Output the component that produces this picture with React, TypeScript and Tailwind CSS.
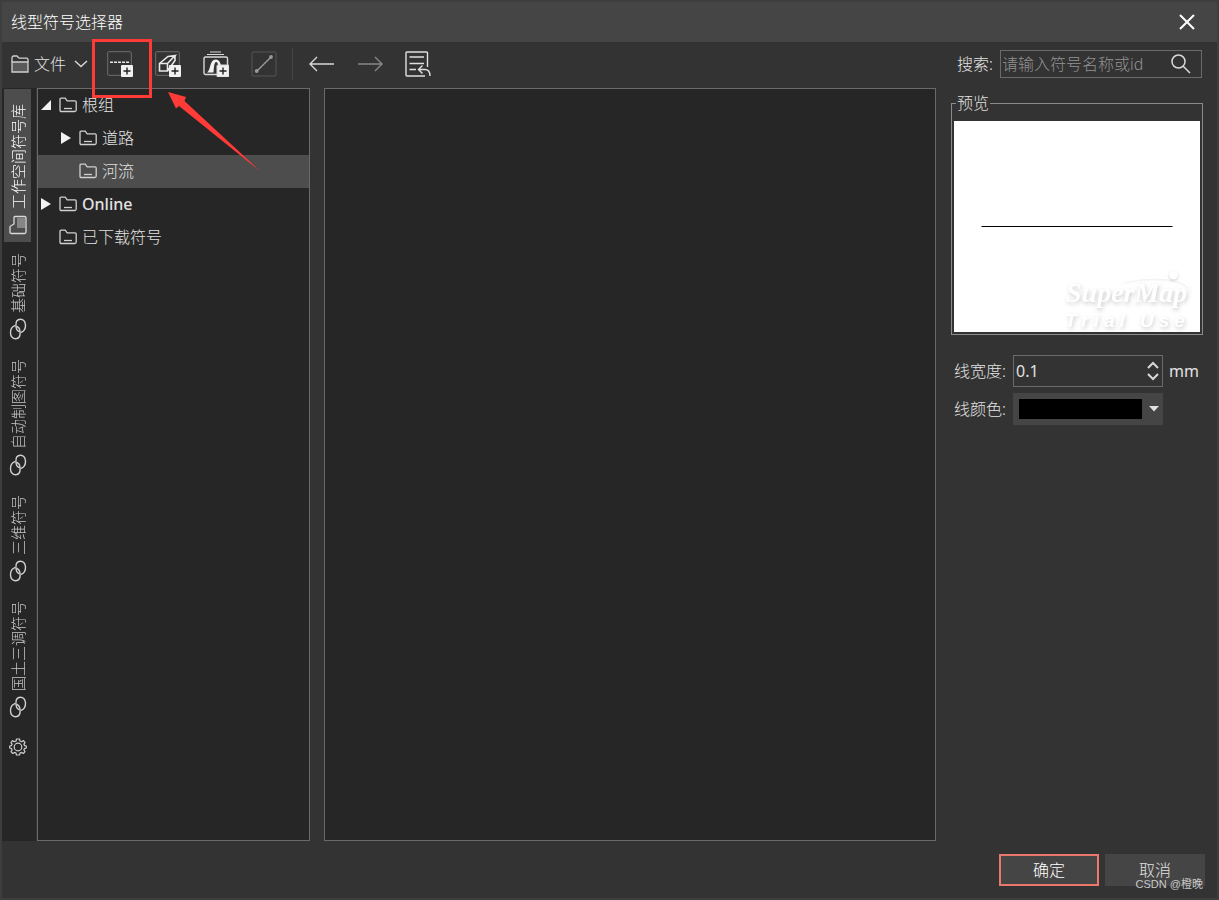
import React, { useState } from 'react';

interface IconProps {
  className?: string;
}

interface TreeItem {
  id: string;
  label: string;
  level: number;
  state: 'open' | 'closed' | 'leaf';
}

const libraryTabs = [
  { id: 'workspace', label: '工作空间符号库' },
  { id: 'basic', label: '基础符号' },
  { id: 'mapping', label: '自动制图符号' },
  { id: 'three', label: '三维符号' },
  { id: 'survey', label: '国土三调符号' },
];

const treeItems: TreeItem[] = [
  { id: 'root', label: '根组', level: 0, state: 'open' },
  { id: 'road', label: '道路', level: 1, state: 'closed' },
  { id: 'river', label: '河流', level: 1, state: 'leaf' },
  { id: 'online', label: 'Online', level: 0, state: 'closed' },
  { id: 'downloaded', label: '已下载符号', level: 0, state: 'leaf' },
];

const FolderIcon = ({ className = '' }: IconProps) => (
  <svg className={className} width="18" height="16" viewBox="0 0 18 16" fill="none" stroke="#d0d0d0" strokeWidth="1.3">
    <path d="M1 13.2V2.5Q1 1.2 2.2 1.2H6.2L8.2 3.8H16Q17.2 3.8 17.2 5V13Q17.2 14.5 15.8 14.5H2.3Q1 14.5 1 13.2Z" />
    <path d="M5 11.5H13" />
  </svg>
);

const FileIcon = () => (
  <svg width="18" height="18" viewBox="0 0 18 18" fill="none" stroke="#d0d0d0" strokeWidth="1.3">
    <path d="M1 7H17V17H1Z" fill="#5a5a5a" />
    <path d="M1 7V2.2L2.2 1H6L8 3.2H16L17 4.2V7" />
  </svg>
);

const PlusBadge = () => (
  <g>
    <rect x="14" y="14" width="12" height="12" rx="1" fill="#f0f0f0" />
    <path d="M20 16.5V23.5M16.5 20H23.5" stroke="#222" strokeWidth="1.4" />
  </g>
);

const LineSymbolIcon = () => (
  <svg width="26" height="26" viewBox="0 0 26 26" fill="none">
    <rect x=".7" y=".7" width="23.6" height="23.6" rx="1" stroke="#6e6e6e" />
    <path d="M3 11.2H22" stroke="#e8e8e8" strokeWidth="1.4" strokeDasharray="3 1" />
    <PlusBadge />
  </svg>
);

const Line3DIcon = () => (
  <svg width="26" height="26" viewBox="0 0 26 26" fill="none">
    <rect x=".7" y=".7" width="23.6" height="23.6" rx="1" stroke="#6e6e6e" />
    <path
      d="M4.5 12.500H12.500V20H4.500ZM4.500 12.500L13 5.500L20 4.500L12.500 12.500M12.500 20L20 9.500V4.500"
      stroke="#e8e8e8"
      strokeWidth="1.6"
    />
    <PlusBadge />
  </svg>
);

const TunnelIcon = () => (
  <svg width="26" height="26" viewBox="0 0 26 26" fill="none" stroke="#d8d8d8">
    <path d="M7 1H18M4 3.500H21" strokeWidth="1.2" />
    <rect x="1" y="6" width="23.500" height="17.500" rx="1.500" strokeWidth="1.4" />
    <path
      d="M4 21.500C8 19 6.500 8.500 12.500 8.500S17 16 20 18L17 20C14.500 16 15.500 11 13.200 11C10.800 11 11 18 10.500 21.500Z"
      fill="#f0f0f0"
      stroke="none"
    />
    <PlusBadge />
  </svg>
);

const EditLineIcon = () => (
  <svg width="26" height="26" viewBox="0 0 26 26" fill="none">
    <rect x="1" y="1" width="24" height="24" rx="1" stroke="#565656" />
    <path d="M6 20L20 6" stroke="#a0a0a0" strokeWidth="1.3" />
    <circle cx="5.7" cy="20" r="1.9" fill="#999" />
    <circle cx="20" cy="6" r="1.9" fill="#999" />
  </svg>
);

const ArrowIcon = ({ className = '' }: IconProps) => (
  <svg className={className} width="26" height="18" viewBox="0 0 26 18" fill="none" stroke="currentColor" strokeWidth="1.4">
    <path d="M1.500 9H25M8 2L1 9L8 16" />
  </svg>
);

const ListBackIcon = () => (
  <svg width="26" height="26" viewBox="0 0 26 26" fill="none" stroke="#e0e0e0" strokeWidth="1.4">
    <path d="M22.500 16V2Q22.500 1 21.500 1H2Q1 1 1 2V24Q1 25 2 25H20" />
    <path d="M4.500 6H19M4.500 12.500H19M4.500 18.500H11" />
    <path d="M17.500 14.500L13.500 18.500L17.500 22.500M14 18.500H20Q25 18.500 25 25" />
  </svg>
);

const LinkIcon = () => (
  <svg width="18" height="22" viewBox="0 0 18 22" fill="none" stroke="#d0d0d0" strokeWidth="1.4" strokeLinecap="round">
    <path d="M12.200 14.300C14.800 13.300 16.600 10.500 16.500 7C16.400 3.200 14.200 1.200 11.300 1.300S6.800 3.800 6.900 7.200C7 10.500 8 12.800 10 13.500" />
    <path d="M5.800 7.700C3.200 8.700 1.400 11.500 1.500 15C1.600 18.800 3.800 20.800 6.700 20.700S11.200 18.200 11.100 14.800C11 11.500 10 9.200 8 8.500" />
  </svg>
);

const WorkspaceIcon = () => (
  <svg width="18" height="20" viewBox="0 0 18 20" fill="none" stroke="#dadada" strokeWidth="1.3">
    <path d="M8 3H16V13H8Z" fill="#858585" stroke="none" />
    <path d="M6 1.500H15.500Q17 1.500 17 3V17Q17 18.500 15.500 18.500H2.500Q1 18.500 1 17V12Q1 11 2.500 10.500L5 9V2.500Q5 1.500 6 1.500Z" />
  </svg>
);

const GearIcon = () => (
  <svg width="18" height="18" viewBox="0 0 18 18" fill="none" stroke="#d0d0d0" strokeWidth="1.2" strokeLinejoin="round">
    <path d="M7.500 1H10.500L11 3L12.800 3.700L14.500 2.600L16 4.600L14.900 6.200L15.500 7.600L17.300 8V10L15.500 10.600L14.900 12L16 13.600L14.300 15.500L12.600 14.400L11 15.100L10.500 17H7.500L7 15.100L5.400 14.400L3.700 15.500L2 13.600L3.100 12L2.500 10.600L.7 10V8L2.500 7.600L3.100 6.200L2 4.600L3.500 2.600L5.200 3.700L7 3Z" />
    <circle cx="9" cy="9" r="3.8" />
  </svg>
);

const toolButtons = [
  { id: 'line', title: '新建二维线型', icon: <LineSymbolIcon /> },
  { id: 'line3d', title: '新建三维线型', icon: <Line3DIcon /> },
  { id: 'tunnel', title: '新建隧道线型', icon: <TunnelIcon /> },
  { id: 'edit', title: '编辑', icon: <EditLineIcon /> },
];

const TreeArrow = ({ state }: { state: TreeItem['state'] }) => (
  <svg width="12" height="14" viewBox="0 0 12 14" fill="#f2f2f2">
    {state === 'closed' && <path d="M0 1V13L10 7Z" />}
    {state === 'open' && <path d="M0 12H10V2Z" />}
  </svg>
);

// White lettering that only shows through its shadow
const PreviewPane = () => (
  <svg className="block h-[211px] w-full bg-white" viewBox="0 0 246 211">
    <path d="M27.500 105.500H218.500" stroke="#000" />
    <g fill="#fff" className="drop-shadow-[1px_2px_2px_rgba(0,0,0,0.2)]">
      <text x="112" y="181" fontFamily="Liberation Serif, serif" fontSize="28" fontWeight="700" fontStyle="italic">
        SuperMap
      </text>
      <text x="111" y="206" fontFamily="Liberation Sans, sans-serif" fontSize="19" fontWeight="700" fontStyle="italic" className="tracking-[5px]">
        Trial Use
      </text>
    </g>
    <path
      d="M165 162C190 152 236 149 238 171C232 157 200 154 165 162Z"
      fill="#fff"
      className="drop-shadow-[0_1px_1px_rgba(0,0,0,0.08)]"
    />
    <circle cx="219.500" cy="154" r="4.500" fill="#fff" className="drop-shadow-[0_1px_1px_rgba(0,0,0,0.2)]" />
  </svg>
);

const Annotation = () => (
  <svg className="pointer-events-none absolute left-[88px] top-[34px]" width="176" height="140" viewBox="90 36 176 140">
    <rect x="93.500" y="40.500" width="57" height="56" fill="none" stroke="#ff3b38" strokeWidth="3" />
    <path d="M168 92L186 97L184.500 101L261 172L179 106L176 108.500Z" fill="#ff3b38" />
  </svg>
);

export default function App() {
  const [activeTab, setActiveTab] = useState('workspace');
  const [selected, setSelected] = useState('river');
  const [lineWidth, setLineWidth] = useState(0.1);
  const [keyword, setKeyword] = useState('');

  const stepWidth = (delta: number) => {
    setLineWidth(value => Math.max(0, Math.round((value + delta) * 10) / 10));
  };

  return (
    <div className="relative flex min-h-screen w-full flex-col border-2 border-[#3e3e3e] bg-[#333] font-['Noto_Sans','Noto_Sans_CJK_SC',sans-serif] text-base font-light text-[#e2e2e2]">
      <header className="flex h-10 items-center justify-between bg-[#454545] pl-[9px] pr-[22px]">
        <h1 className="text-white">线型符号选择器</h1>
        <button aria-label="关闭">
          <svg width="16" height="16" viewBox="0 0 16 16" stroke="#fff" strokeWidth="2">
            <path d="M1 1L15 15M15 1L1 15" />
          </svg>
        </button>
      </header>

      {/* Toolbar */}
      <div className="flex h-[46px] items-center pb-[2px]">
        <button className="flex w-[94px] items-center pl-[9px]">
          <FileIcon />
          <span className="ml-[5px]">文件</span>
          <svg className="ml-2" width="14" height="8" viewBox="0 0 14 8" fill="none" stroke="#d8d8d8" strokeWidth="1.4">
            <path d="M1 1L7 6.500L13 1" />
          </svg>
        </button>
        {toolButtons.map(tool => (
          <button key={tool.id} aria-label={tool.title} className="flex w-12 items-center justify-center">
            {tool.icon}
          </button>
        ))}
        <div className="ml-1 mr-[5px] h-8 w-px bg-[#454545]"></div>
        <button aria-label="后退" className="flex w-12 items-center justify-center">
          <ArrowIcon className="text-[#d8d8d8]" />
        </button>
        <button aria-label="前进" className="flex w-12 items-center justify-center">
          <ArrowIcon className="rotate-180 text-[#888]" />
        </button>
        <button aria-label="返回列表" className="flex w-12 items-center justify-center">
          <ListBackIcon />
        </button>
        <div className="ml-auto flex items-center pr-[15px]">
          <label htmlFor="search" className="mr-[7px]">搜索:</label>
          <div className="flex h-7 w-[202px] items-center border border-[#6a6a6a]">
            <input
              id="search"
              value={keyword}
              onChange={e => setKeyword(e.target.value)}
              placeholder="请输入符号名称或id"
              className="min-w-0 flex-1 bg-transparent pl-px outline-none placeholder:text-[#929292]"
            />
            <button aria-label="搜索" className="mr-[10px]">
              <svg width="20" height="20" viewBox="0 0 20 20" fill="none" stroke="#d8d8d8" strokeWidth="1.5">
                <circle cx="7.500" cy="7.500" r="6.500" />
                <path d="M12 12L19 19" />
              </svg>
            </button>
          </div>
        </div>
      </div>

      <main className="flex flex-1 pr-[14px]">
        {/* Library tabs */}
        <nav className="mr-px flex w-[34px] flex-col bg-[#262626] pl-[2px] pt-px">
          {libraryTabs.map(tab => (
            <button
              key={tab.id}
              onClick={() => setActiveTab(tab.id)}
              className={`flex w-[27px] flex-col items-center ${activeTab === tab.id ? 'gap-[6px] bg-[#4d4d4d] pb-[7px] pt-[15px] text-white' : 'gap-[5px] pb-2 pt-[11px] text-[#c8c8c8]'}`}
            >
              <span className="rotate-180 text-[15px] leading-5 [text-orientation:sideways] [writing-mode:vertical-rl]">
                {tab.label}
              </span>
              {tab.id === 'workspace' ? <WorkspaceIcon /> : <LinkIcon />}
            </button>
          ))}
          <button aria-label="设置" className="mt-3 flex w-[27px] justify-center">
            <GearIcon />
          </button>
        </nav>

        <ul role="tree" className="w-[273px] border border-[#6a6a6a] bg-[#262626]">
          {treeItems.map(item => (
            <li key={item.id} role="treeitem" aria-selected={selected === item.id}>
              <button
                onClick={() => setSelected(item.id)}
                className={`flex h-[33px] w-full items-center pb-[2px] ${item.level === 1 ? 'pl-[23px]' : 'pl-[3px]'} ${selected === item.id ? 'bg-[#4d4d4d]' : ''}`}
              >
                <TreeArrow state={item.state} />
                <FolderIcon className="ml-[6px] mr-[5px]" />
                <span className={item.id === 'online' ? 'font-medium' : ''}>{item.label}</span>
              </button>
            </li>
          ))}
        </ul>

        <section className="ml-[14px] mr-[15px] flex-1 border border-[#6a6a6a] bg-[#262626]"></section>

        {/* Preview and line settings */}
        <aside className="w-[252px] pt-[3px]">
          <fieldset className="border border-[#8a8a8a] px-[2px] pb-[2px] pt-[6px]">
            <legend className="ml-[2px] px-px leading-6">预览</legend>
            <PreviewPane />
          </fieldset>
          <div className="mt-5 flex items-center pl-[3px]">
            <label htmlFor="line-width" className="w-[59px]">线宽度:</label>
            <div className="flex h-8 w-[150px] items-center border border-[#6a6a6a] pr-[3px]">
              <input
                id="line-width"
                inputMode="decimal"
                value={lineWidth}
                onChange={e => setLineWidth(Number(e.target.value) || 0)}
                className="min-w-0 flex-1 bg-transparent pl-[2px] font-normal outline-none"
              />
              <div className="flex flex-col gap-1">
                <button aria-label="增加" onClick={() => stepWidth(0.1)}>
                  <svg width="12" height="8" viewBox="0 0 12 8" fill="none" stroke="#d8d8d8" strokeWidth="2">
                    <path d="M1 7L6 2L11 7" />
                  </svg>
                </button>
                <button aria-label="减少" onClick={() => stepWidth(-0.1)}>
                  <svg width="12" height="8" viewBox="0 0 12 8" fill="none" stroke="#d8d8d8" strokeWidth="2">
                    <path d="M1 1L6 6L11 1" />
                  </svg>
                </button>
              </div>
            </div>
            <span className="ml-[6px] font-normal">mm</span>
          </div>
          <div className="mt-[6px] flex items-center pl-[3px]">
            <label htmlFor="line-color" className="w-[59px]">线颜色:</label>
            <div className="flex h-8 w-[150px] items-center bg-[#454545] pl-[6px]">
              <select id="line-color" className="h-5 w-[123px] appearance-none bg-black text-black outline-none">
                <option value="#000000"></option>
              </select>
              <svg className="ml-[6px]" width="12" height="6" viewBox="0 0 12 6" fill="#e0e0e0">
                <path d="M1 0H11L6 5.500Z" />
              </svg>
            </div>
          </div>
        </aside>
      </main>

      <footer className="flex justify-end gap-[6px] pb-3 pr-3 pt-[13px]">
        <button className="h-8 w-[100px] border-2 border-[#ea786c] bg-[#454545] text-white">确定</button>
        <button className="h-8 w-[100px] bg-[#454545]">取消</button>
      </footer>

      <Annotation />
      <span className="pointer-events-none absolute bottom-[6px] right-[14px] font-['Liberation_Sans','Noto_Sans_CJK_SC',sans-serif] text-[11px] leading-4 font-normal text-[#c8c8c8]">
        CSDN @橙晚
      </span>
    </div>
  );
}
